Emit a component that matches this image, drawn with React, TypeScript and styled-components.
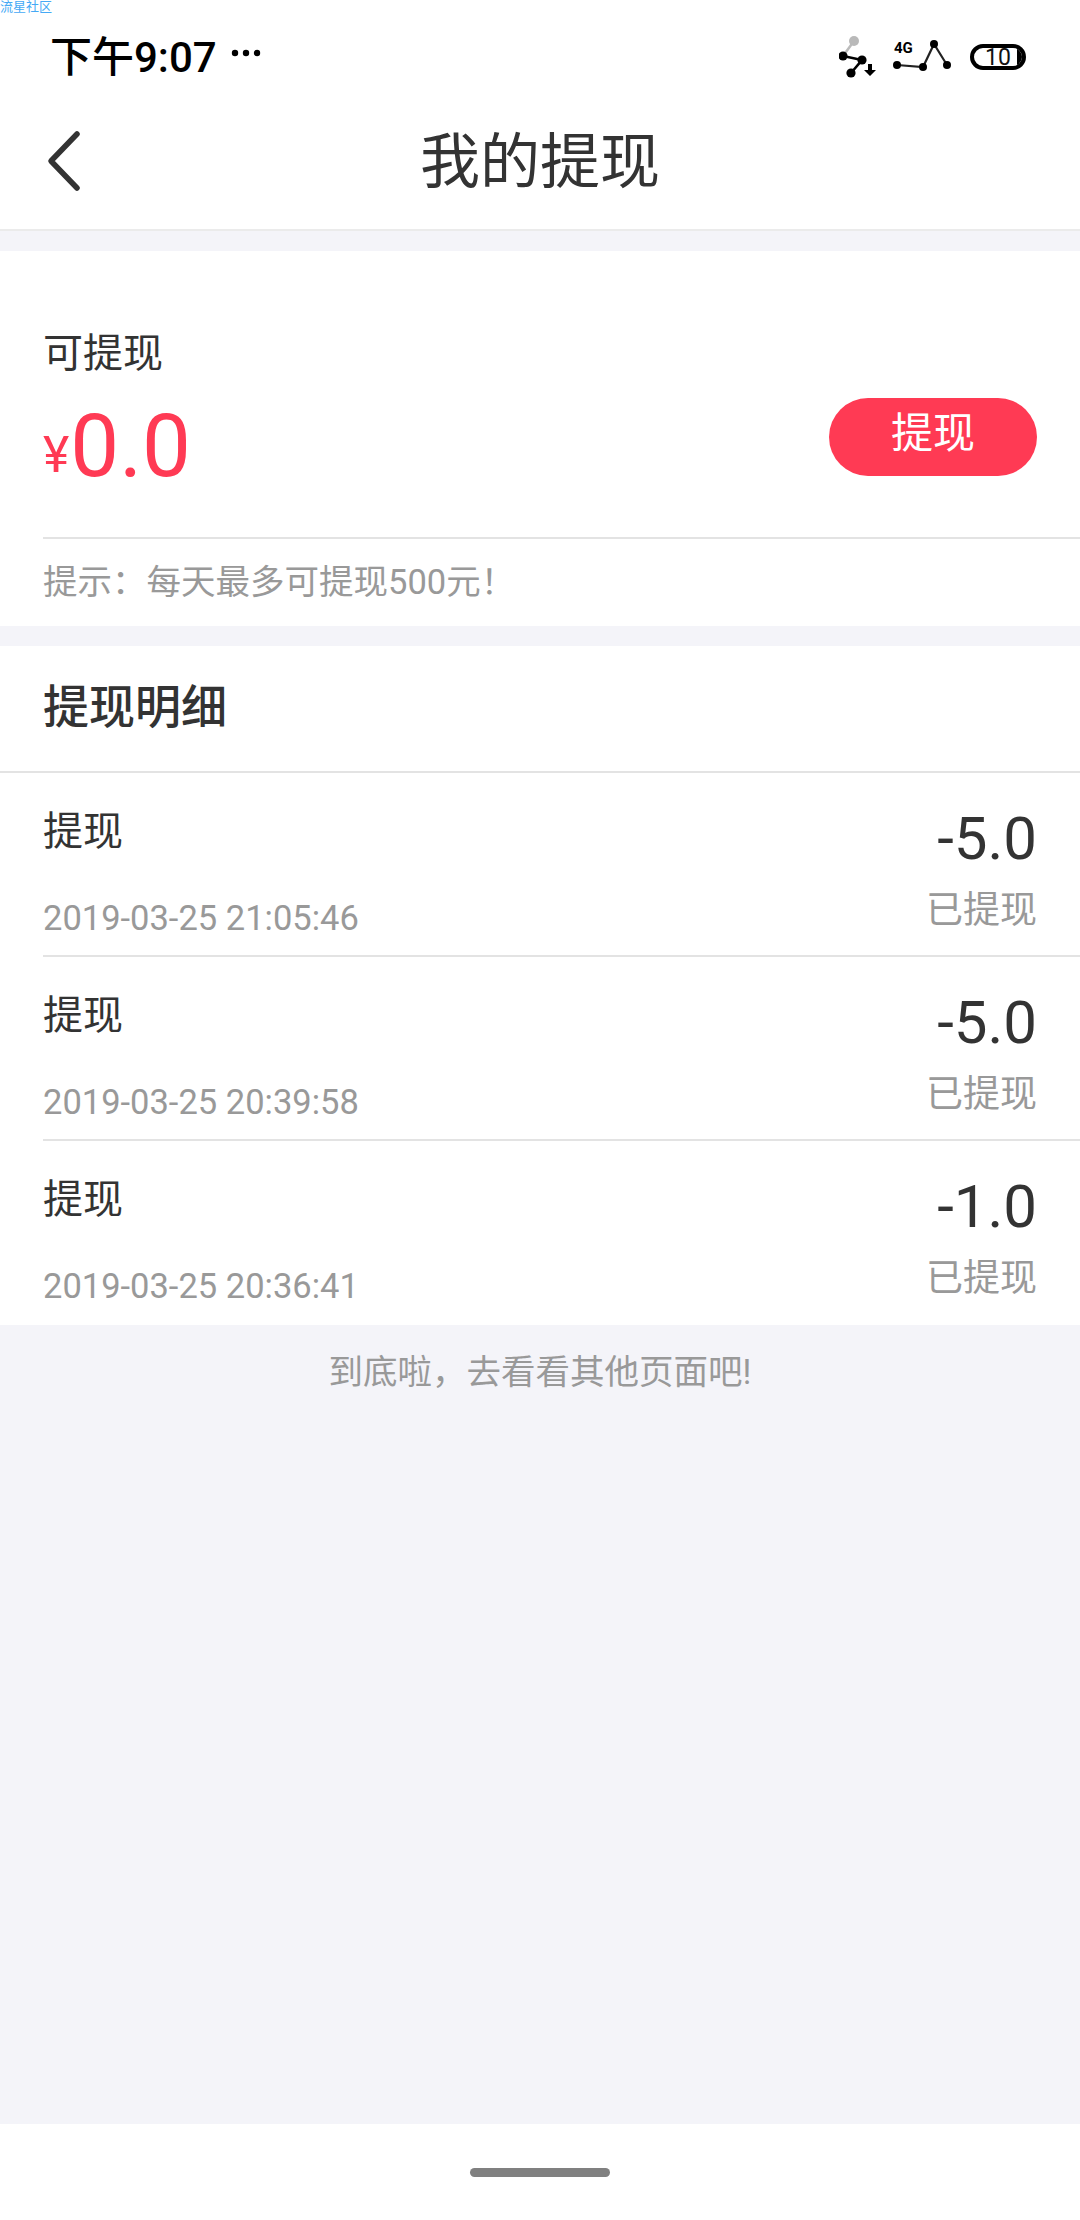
import React from "react";
import styled, { createGlobalStyle } from "styled-components";

const FONT = `Roboto, "Noto Sans CJK SC", sans-serif`;

const Global = createGlobalStyle`
  html, body { margin: 0; padding: 0; background: #f4f4f9; }
  * { box-sizing: border-box; }
  body { font-family: ${FONT}; }
`;

const Page = styled.div`
  width: 1080px;
  height: 2220px;
  display: flex;
  flex-direction: column;
  background: #f4f4f9;
  overflow: hidden;
  position: relative;
`;

const Watermark = styled.div`
  position: absolute;
  left: 0;
  top: 0;
  font-size: 13px;
  line-height: 14px;
  color: #45a9f5;
`;

const Top = styled.header`
  height: 231px;
  background: #fff;
  border-bottom: 2px solid #ebebeb;
  flex-shrink: 0;
`;

const StatusBar = styled.div`
  height: 90px;
  padding: 10px 54px 0 50px;
  display: flex;
  align-items: center;
  justify-content: space-between;
`;

const StatusLeft = styled.div`
  display: flex;
  align-items: center;
  gap: 14px;
  margin-top: 6px;
`;

const Clock = styled.span`
  font-size: 42px;
  font-weight: 500;
  color: #000;
  letter-spacing: 0;
`;

const StatusRight = styled.div`
  display: flex;
  align-items: center;
  margin-top: 14px;
`;

const Battery = styled.div`
  width: 56px;
  height: 26px;
  margin-left: 15px;
  border: 4px solid #000;
  border-radius: 13px;
  position: relative;
  overflow: hidden;
  display: flex;
  align-items: center;
  justify-content: center;
  font-size: 23px;
  line-height: 1;
  color: #111;
  &::after {
    content: "";
    position: absolute;
    right: 0;
    top: 0;
    bottom: 0;
    width: 5px;
    background: #000;
  }
`;

const NavBar = styled.div`
  height: 139px;
  position: relative;
  display: flex;
  align-items: center;
  justify-content: center;
`;

const BackIcon = styled.svg`
  position: absolute;
  left: 46px;
  top: 40px;
`;

const Title = styled.h1`
  margin: 0;
  font-size: 60px;
  font-weight: 400;
  color: #333;
  line-height: 1;
  padding-top: 6px;
`;

const Balance = styled.section`
  margin-top: 20px;
  height: 375px;
  background: #fff;
  padding-left: 43px;
  display: flex;
  flex-direction: column;
  flex-shrink: 0;
`;

const BalanceMain = styled.div`
  height: 288px;
  display: flex;
  justify-content: space-between;
  align-items: flex-start;
  padding: 78px 43px 0 0;
  border-bottom: 2px solid #e3e3e3;
`;

const Label = styled.div`
  font-size: 40px;
  line-height: 50px;
  color: #333;
`;

const Amount = styled.div`
  color: #ff3a54;
  font-size: 87px;
  line-height: 90px;
  margin-top: 22px;
`;

const Yen = styled.span`
  font-size: 50px;
  vertical-align: 4px;
  margin-right: 1px;
`;

const WithdrawButton = styled.button`
  width: 208px;
  height: 78px;
  margin-top: 69px;
  border: 0;
  border-radius: 39px;
  background: #ff3a54;
  color: #fff;
  font-family: ${FONT};
  font-size: 42px;
  line-height: 1;
  padding: 0 0 6px;
`;

const Tip = styled.div`
  font-size: 34.5px;
  line-height: 86px;
  color: #999;
`;

const Details = styled.section`
  margin-top: 20px;
  background: #fff;
  flex-shrink: 0;
`;

const DetailsHead = styled.h2`
  margin: 0;
  height: 127px;
  padding: 0 0 12px 43px;
  display: flex;
  align-items: center;
  font-size: 46px;
  font-weight: 500;
  color: #333;
  border-bottom: 2px solid #e3e3e3;
`;

const RowWrap = styled.div`
  padding-left: 43px;
`;

const Row = styled.div<{ $last?: boolean }>`
  height: 184px;
  padding-right: 43px;
  display: flex;
  justify-content: space-between;
  border-bottom: ${(p) => (p.$last ? "0" : "2px solid #e3e3e3")};
`;

const RowLeft = styled.div`
  display: flex;
  flex-direction: column;
  padding-top: 32px;
`;

const RowName = styled.div`
  font-size: 40px;
  line-height: 54px;
  color: #333;
`;

const RowTime = styled.div`
  margin-top: 38px;
  font-size: 34.5px;
  line-height: 42px;
  color: #999;
`;

const RowRight = styled.div`
  display: flex;
  flex-direction: column;
  align-items: flex-end;
  padding-top: 31px;
`;

const RowAmount = styled.div`
  font-size: 60px;
  line-height: 70px;
  color: #333;
`;

const RowStatus = styled.div`
  margin-top: 12px;
  font-size: 37px;
  line-height: 50px;
  color: #999;
`;

const End = styled.div`
  flex: 1;
  text-align: center;
  font-size: 34.5px;
  line-height: 46px;
  padding-top: 24px;
  color: #999;
`;

const BottomBar = styled.footer`
  height: 96px;
  background: #fff;
  display: flex;
  justify-content: center;
  padding-top: 44px;
  flex-shrink: 0;
`;

const HomeBar = styled.div`
  width: 140px;
  height: 9px;
  border-radius: 5px;
  background: #808080;
`;

const records = [
  { amount: "-5.0", time: "2019-03-25 21:05:46" },
  { amount: "-5.0", time: "2019-03-25 20:39:58" },
  { amount: "-1.0", time: "2019-03-25 20:36:41" },
];

export default function App() {
  return (
    <Page>
      <Global />
      <Watermark>流星社区</Watermark>
      <Top>
        <StatusBar>
          <StatusLeft>
            <Clock>下午9:07</Clock>
            <svg width="30" height="8" viewBox="0 0 30 8">
              <circle cx="4" cy="4" r="3.2" fill="#000" />
              <circle cx="15" cy="4" r="3.2" fill="#000" />
              <circle cx="26" cy="4" r="3.2" fill="#000" />
            </svg>
          </StatusLeft>
          <StatusRight>
            <svg width="40" height="44" viewBox="0 0 40 44">
              <line x1="15" y1="6" x2="4" y2="21" stroke="#bbb" strokeWidth="2.5" />
              <circle cx="15" cy="6" r="5" fill="#b9b9b9" />
              <path d="M4 21 L23 25 L12 38" fill="none" stroke="#000" strokeWidth="2.6" />
              <circle cx="4" cy="21" r="4.6" fill="#000" />
              <circle cx="23" cy="25" r="4.6" fill="#000" />
              <circle cx="12" cy="38" r="4.6" fill="#000" />
              <path d="M29 29 h4 v6 h4 l-6 6 l-6 -6 h4 z" fill="#000" />
            </svg>
            <svg width="62" height="44" viewBox="0 0 62 44" style={{ marginLeft: 14 }}>
              <text x="1" y="18" fontFamily="Roboto" fontWeight="700" fontSize="15" fill="#000">4G</text>
              <path d="M4 30 L30 32 L41 9 L54 30" fill="none" stroke="#222" strokeWidth="2.2" />
              <circle cx="4" cy="30" r="4" fill="#000" />
              <circle cx="30" cy="32" r="4" fill="#000" />
              <circle cx="41" cy="9" r="4" fill="#000" />
              <circle cx="54" cy="30" r="4" fill="#000" />
            </svg>
            <Battery>10</Battery>
          </StatusRight>
        </StatusBar>
        <NavBar>
          <BackIcon width="36" height="64" viewBox="0 0 36 64">
            <path d="M31 4 L5 31 L31 58" fill="none" stroke="#333" strokeWidth="5.5" strokeLinecap="round" strokeLinejoin="round" />
          </BackIcon>
          <Title>我的提现</Title>
        </NavBar>
      </Top>

      <Balance>
        <BalanceMain>
          <div>
            <Label>可提现</Label>
            <Amount>
              <Yen>¥</Yen>0.0
            </Amount>
          </div>
          <WithdrawButton>提现</WithdrawButton>
        </BalanceMain>
        <Tip>提示：每天最多可提现500元！</Tip>
      </Balance>

      <Details>
        <DetailsHead>提现明细</DetailsHead>
        <RowWrap>
          {records.map((r, i) => (
            <Row key={r.time} $last={i === records.length - 1}>
              <RowLeft>
                <RowName>提现</RowName>
                <RowTime>{r.time}</RowTime>
              </RowLeft>
              <RowRight>
                <RowAmount>{r.amount}</RowAmount>
                <RowStatus>已提现</RowStatus>
              </RowRight>
            </Row>
          ))}
        </RowWrap>
      </Details>

      <End>到底啦，去看看其他页面吧!</End>
      <BottomBar>
        <HomeBar />
      </BottomBar>
    </Page>
  );
}
